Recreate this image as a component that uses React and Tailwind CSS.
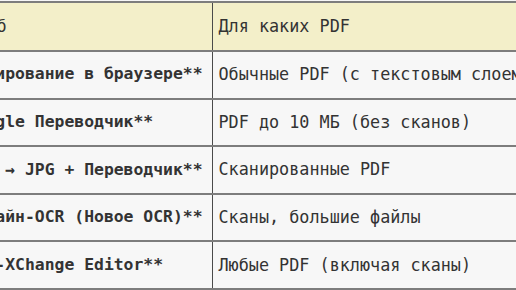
const ROWS = [
  { method: '**Копирование в браузере**', pdf: 'Обычные PDF (с текстовым слоем)' },
  { method: '**Google Переводчик**', pdf: 'PDF до 10 МБ (без сканов)' },
  { method: '**PDF → JPG + Переводчик**', pdf: 'Сканированные PDF' },
  { method: '**Онлайн-OCR (Новое OCR)**', pdf: 'Сканы, большие файлы' },
  { method: '**PDF-XChange Editor**', pdf: 'Любые PDF (включая сканы)' },
];

export default function App() {
  return (
    <div className="w-[516px] h-[290px] overflow-hidden bg-[#f6f6f6] pt-[1px] font-['DejaVu_Sans_Mono',monospace] text-[16.8px] text-[#333]">
      <table className="ml-[-60px] w-[612px] min-w-[612px] border-collapse table-fixed">
        <colgroup>
          <col className="w-[272px]" />
          <col className="w-[340px]" />
        </colgroup>
        <thead>
          <tr className="h-[49px] bg-[#f3efc9]">
            <th className="border-y-2 border-y-[#7d7d7d] border-r border-r-[#4a4a4a] px-[6px] text-left font-normal">Способ</th>
            <th className="border-y-2 border-y-[#7d7d7d] px-[6px] text-left font-normal">Для каких PDF</th>
          </tr>
        </thead>
        <tbody>
          {ROWS.map((r) => (
            <tr key={r.method} className="h-[47.6px] bg-[#f7f7f7]">
              <td className="border-y-2 border-y-[#7d7d7d] border-r border-r-[#4a4a4a] px-[6px] text-[16.4px] font-bold whitespace-nowrap">{r.method}</td>
              <td className="border-y-2 border-y-[#7d7d7d] px-[6px] whitespace-nowrap">{r.pdf}</td>
            </tr>
          ))}
        </tbody>
      </table>
    </div>
  );
}
